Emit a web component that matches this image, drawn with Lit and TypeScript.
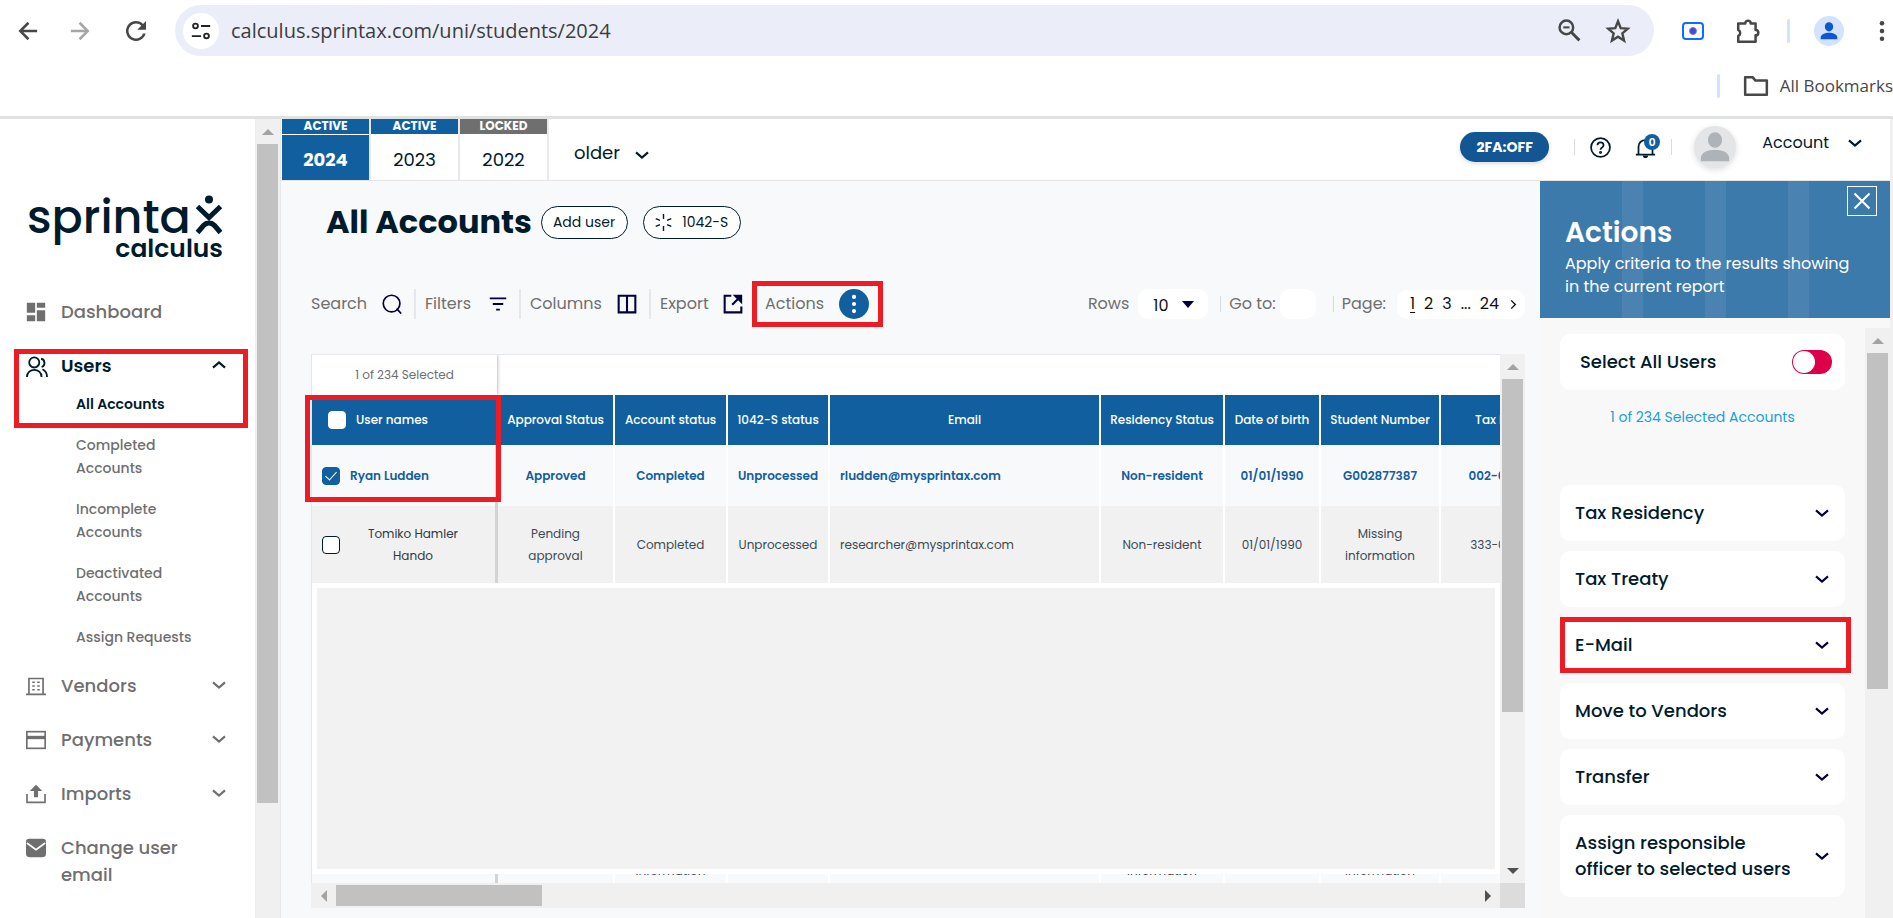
import { LitElement, html, css, svg, nothing } from "lit";
import { customElement, property } from "lit/decorators.js";

const icon = (name: string, size = 24) => html`<svg class="icon" width=${size} height=${size} viewBox="0 0 24 24" fill="none" stroke="currentColor" stroke-width="2" aria-hidden="true">${ICONS[name]}</svg>`;

const ICONS: Record<string, unknown> = {
  back: svg`<path d="M22 12H4M12.500 3 3.500 12l9 9" stroke-width="2.700"/>`,
  forward: svg`<path d="M2 12h18M11.500 3l9 9-9 9" stroke-width="2.700"/>`,
  reload: svg`<path d="M17.650 6.350A8 8 0 1 0 19.730 14h-2.080A6 6 0 1 1 12 6c1.660 0 3.140.690 4.220 1.780L13 11h7V4z" fill="currentColor" stroke="none"/>`,
  tune: svg`<circle cx="6" cy="6.500" r="2.600"/><path d="M12 6.500h10M2 17.500h10"/><circle cx="18" cy="17.500" r="2.600"/>`,
  zoomout: svg`<circle cx="9" cy="9" r="6.500" stroke-width="2.400"/><path d="M14 14l7.500 7.500" stroke-width="2.800"/><path d="M6 9h6"/>`,
  star: svg`<path d="M12 3l2.500 6.300 6.500.5-5 4.400 1.600 6.600-5.600-3.600-5.600 3.600L8 14.200 3 9.800l6.500-.5z" stroke-width="2.200"/>`,
  camera: svg`<rect x="2" y="4" width="20" height="16" rx="3" stroke="#0d6efd"/><circle cx="12" cy="12" r="3.500" fill="#4648c8" stroke="#7b7bea" stroke-width="1"/>`,
  puzzle: svg`<path d="M3 5h6.500a2.500 2.500 0 0 1 5 0H19v6a2.500 2.500 0 0 1 0 5v6H3v-5.500a3 3 0 0 0 0-5.500z" stroke-width="2.300" stroke-linejoin="round"/>`,
  person: svg`<ellipse cx="12" cy="7" rx="5" ry="5.500" fill="currentColor" stroke="none"/><path d="M2 22v-2c0-4 5-6 10-6s10 2 10 6v2z" fill="currentColor" stroke="none"/>`,
  dots: svg`<g fill="currentColor" stroke="none"><circle cx="12" cy="3.500" r="2.500"/><circle cx="12" cy="12" r="2.500"/><circle cx="12" cy="20.500" r="2.500"/></g>`,
  folder: svg`<path d="M2 4h7l2.500 3H22v13H2z" stroke-width="2.300" stroke-linejoin="round"/>`,
  chevron: svg`<path d="M3 8l9 8 9-8" stroke-width="3.200"/>`,
  chevronup: svg`<path d="M3 16l9-8 9 8" stroke-width="3.200"/>`,
  dashboard: svg`<g fill="currentColor" stroke="none"><path d="M1 1h10v12H1zM13 1h10v6H13zM1 16h10v7H1zM13 10h10v13H13z"/></g>`,
  users: svg`<circle cx="9" cy="7" r="5.500"/><path d="M1 23c0-10.500 16-10.500 16 0M16.500 3c4.500 1 5 7.500.5 9M18 14.500c3 1.500 5 4.500 5 8.500"/>`,
  building: svg`<path d="M0 22h24M3.500 22V3h17v19"/><path d="M7.500 7.500h3M13.500 7.500h3M7.500 12h3M13.500 12h3M7.500 16.500h3M13.500 16.500h3"/>`,
  card: svg`<rect x="1" y="2" width="22" height="20"/><path d="M1 9h22" stroke-width="4"/>`,
  upload: svg`<path d="M1.200 12v10h21.600V12"/><path d="M12 1l7.500 7.500h-5V16h-5V8.500h-5z" fill="currentColor" stroke="none"/>`,
  mail: svg`<rect x="0" y="1" width="24" height="22" rx="4" fill="currentColor" stroke="none"/><path d="M1 6l11 8 11-8" stroke="#fff"/>`,
  search: svg`<circle cx="11.500" cy="11.500" r="10"/><path d="M17.500 17.500 23 23.500"/>`,
  filter: svg`<path d="M1 4.500h22M5 12h14M9.500 19.500h5" stroke-width="2.500"/>`,
  columns: svg`<path d="M2 2h20v20H2zM12 2v20" stroke-width="2.500"/>`,
  export: svg`<path d="M10 2H2v20h20v-7M11 13 21 3" stroke-width="2.500"/><path d="M14 2h8v8z" fill="currentColor"/>`,
  help: svg`<circle cx="12" cy="12" r="10.800"/><path d="M8.500 9.500c0-4.500 7-4.500 7 0 0 2.500-3.500 2.500-3.500 5"/><circle cx="12" cy="17.800" r=".7"/>`,
  bell: svg`<path d="M1 20h22M4 20v-9c0-10 16-10 16 0v9"/><path d="M9 21h6c0 4-6 4-6 0z" fill="currentColor" stroke="none"/>`,
  close: svg`<path d="M2 2l20 20M22 2 2 22" stroke-width="2.800"/>`,
  loader: svg`<path d="M12 0v7M12 17v7M1 6.500l6 2.500M1 17.500 7 15M23 6.500 17 9M23 17.500 17 15"/>`,
  triangle: svg`<path d="M0 6h24L12 20z" fill="currentColor" stroke="none"/>`,
  next: svg`<path d="M7 3l9 9-9 9" stroke-width="3"/>`,
};

const shared = css`
  :host, * { box-sizing: border-box; }
  button, input, select { font: inherit; color: inherit; margin: 0; }
  button { background: none; border: 0; padding: 0; text-align: left; cursor: pointer; }
  a { color: inherit; text-decoration: none; }
  .icon { display: block; flex: none; }
  h1, h2, p { margin: 0; padding: 0; font-size: inherit; }
`;

@customElement("browser-bar")
export class BrowserBar extends LitElement {
  static styles = [shared, css`
    :host { display: block; height: 119px; background: #fff; border-bottom: 3px solid #e0e2e1; font: 20px/26px "Open Sans", "Noto Sans", sans-serif; color: #474747; overflow: hidden; }
    .row { display: flex; align-items: center; height: 51px; margin-top: 5px; padding: 0 0 0 17px; }
    .nav { display: flex; align-items: center; gap: 30px; width: 158px; }
    .off { color: #a6a6a6; }
    .address { flex: 1; height: 51px; display: flex; align-items: center; gap: 12px; padding: 0 23px 0 8px; border-radius: 26px; background: #ebeef8; }
    .tune { width: 36px; height: 36px; border-radius: 50%; background: #fff; color: #222; display: grid; place-items: center; }
    .url { flex: 1; min-width: 0; border: 0; outline: 0; padding: 0; background: none; color: #3c3d40; }
    .zooms { display: flex; gap: 23px; align-items: center; }
    .tools { display: flex; align-items: center; padding-left: 27px; }
    .puzzle { margin: 0 26px 0 30px; }
    .line { width: 3px; height: 24px; border-radius: 2px; background: #d3e3fd; }
    .profile { width: 30px; height: 30px; margin: 0 27px 0 24px; border-radius: 50%; background: #d3e3fd; color: #0b57d0; display: grid; place-items: center; }
    .marks { display: flex; justify-content: flex-end; align-items: center; height: 60px; font-size: 17px; white-space: nowrap; }
    .marks button { display: flex; align-items: center; gap: 11px; margin-left: 23px; }
  `];
  render() {
    return html`
      <div class="row">
        <div class="nav">
          <button aria-label="Back">${icon("back", 22)}</button>
          <button class="off" aria-label="Forward">${icon("forward", 22)}</button>
          <button aria-label="Reload">${icon("reload", 30)}</button>
        </div>
        <div class="address">
          <button class="tune" aria-label="Site information">${icon("tune", 22)}</button>
          <input class="url" aria-label="Address" value="calculus.sprintax.com/uni/students/2024">
          <div class="zooms"><button aria-label="Zoom">${icon("zoomout", 25)}</button><button aria-label="Bookmark">${icon("star", 26)}</button></div>
        </div>
        <div class="tools">
          <button aria-label="Capture">${icon("camera", 24)}</button>
          <button class="puzzle" aria-label="Extensions">${icon("puzzle", 26)}</button>
          <span class="line"></span>
          <button class="profile" aria-label="Profile">${icon("person", 20)}</button>
          <button aria-label="Menu">${icon("dots", 22)}</button>
        </div>
      </div>
      <div class="marks"><span class="line"></span><button>${icon("folder", 26)}All Bookmarks</button></div>`;
  }
}

@customElement("scroll-track")
export class ScrollTrack extends LitElement {
  @property({ type: Boolean, reflect: true }) horizontal = false;
  @property({ type: Number }) share = 0.5;
  @property({ type: Boolean }) end = false;
  static styles = css`
    :host { box-sizing: border-box; display: flex; flex-direction: column; width: 25px; padding: 0 2px; background: #f0f0f0; flex: none; }
    :host([horizontal]) { flex-direction: row; width: auto; height: 25px; padding: 2px 0; }
    .end { flex: none; width: 21px; height: 25px; display: grid; place-items: center; color: #a3a3a3; }
    :host([horizontal]) .end { width: 25px; height: 21px; }
    .last { color: #505050; }
    .lane { flex: 1; display: flex; flex-direction: inherit; min-height: 0; }
    .thumb { background: #c1c1c1; }
  `;
  render() {
    const [a, b] = this.horizontal ? ["M9 0v12L3 6z", "M3 0v12l6-6z"] : ["M0 9h12L6 3z", "M0 3h12L6 9z"];
    return html`<span class="end"><svg width="12" height="12"><path d=${a} fill="currentColor"/></svg></span>
      <div class="lane"><div class="thumb" style="flex: 0 0 ${this.share * 100}%"></div></div>
      ${this.end ? html`<span class="end last"><svg width="12" height="12"><path d=${b} fill="currentColor"/></svg></span>` : nothing}`;
  }
}

@customElement("side-nav")
export class SideNav extends LitElement {
  static styles = [shared, css`
    :host { display: flex; width: 281px; flex: none; background: #fff; border-right: 1px solid #e6e7ea; overflow: hidden; color: #6f6f6f; font: 500 18px/27px Poppins, Inter, sans-serif; }
    .content { flex: 1; padding-top: 72px; }
    .logo { display: block; overflow: visible; margin: 0 0 22px 28px; }
    .wordmark { font: 500 46px Poppins, Lato, sans-serif; fill: #001b2b; }
    .sub { font: 600 25px Poppins, Lato, sans-serif; fill: #001b2b; }
    .item { display: flex; align-items: flex-start; width: 100%; min-height: 54px; padding: 13px 28px 0 26px; }
    .item > .icon { margin: 4px 15px 0 0; }
    .label { flex: 1; }
    .chev { padding-top: 5px; }
    .group { position: relative; color: #001b2b; }
    .item.users { font-weight: 600; min-height: 49px; }
    .item.users > .icon { margin-right: 13px; }
    .mark { position: absolute; inset: 10px 7px -7px 14px; border: 5px solid #ed1c24; pointer-events: none; }
    .current { display: block; padding: 5px 0 5px 76px; font-size: 14px; line-height: 23px; font-weight: 600; }
    .subs { display: flex; flex-direction: column; gap: 18px; padding: 13px 0 10px 76px; font-size: 14px; line-height: 23px; }
  `];
  row(name: string, label: string, open = true) {
    return html`<button class="item">${icon(name, 20)}<span class="label">${label}</span>${open ? html`<span class="chev">${icon("chevron", 16)}</span>` : nothing}</button>`;
  }
  render() {
    return html`
      <nav class="content">
        <svg class="logo" width="200" height="72" viewBox="0 0 200 72" role="img" aria-label="sprintax calculus">
          <text class="wordmark" x="-1" y="42">sprinta</text>
          <path d="M169.500 15.500 181 26.500l11.500-11M169.500 41.500l6-7c3-3.500 8-3.500 11 0l6 7" fill="none" stroke="#001b2b" stroke-width="5"/>
          <circle cx="181" cy="8.500" r="4" fill="#001b2b"/>
          <text class="sub" x="195" y="66" text-anchor="end">calculus</text>
        </svg>
        ${this.row("dashboard", "Dashboard", false)}
        <div class="group">
          <button class="item users" aria-expanded="true">${icon("users", 22)}<span class="label">Users</span><span class="chev">${icon("chevronup", 16)}</span></button>
          <a class="current" href="#all">All Accounts</a>
          <div class="mark"></div>
        </div>
        <div class="subs">
          <a href="#completed">Completed<br>Accounts</a>
          <a href="#incomplete">Incomplete<br>Accounts</a>
          <a href="#deactivated">Deactivated<br>Accounts</a>
          <a href="#assign">Assign Requests</a>
        </div>
        ${this.row("building", "Vendors")}
        ${this.row("card", "Payments")}
        ${this.row("upload", "Imports")}
        ${this.row("mail", "Change user email", false)}
      </nav>
      <scroll-track .share=${0.852}></scroll-track>`;
  }
}

@customElement("year-header")
export class YearHeader extends LitElement {
  static styles = [shared, css`
    :host { display: flex; height: 62px; background: #fff; border-bottom: 1px solid #e4e5e7; color: #001b2b; font: 18px/24px Poppins, Inter, sans-serif; }
    .years { display: flex; margin-left: 1px; }
    .year { display: flex; flex-direction: column; width: 89px; gap: 1px; border-right: 2px solid #e9e9eb; text-align: center; }
    .state { height: 15px; background: #125f9f; color: #fff; font-weight: 700; font-size: 12px; line-height: 13px; }
    .locked { background: #6f6f6f; }
    .num { flex: 1; display: grid; place-items: center; padding-top: 4px; }
    .on { background: #125f9f; color: #fff; font-weight: 700; }
    .older { display: flex; align-items: center; gap: 14px; padding: 6px 0 0 25px; }
    .older .icon { margin-top: 5px; }
    .right { margin-left: auto; display: flex; align-items: center; padding: 0 27px 5px 0; }
    .tfa { width: 89px; height: 30px; border-radius: 15px; background: #125693; color: #fff; font-size: 14px; font-weight: 700; text-align: center; box-shadow: 0 2px 4px #0002; }
    .line { width: 1px; height: 16px; background: #d9dadc; }
    .help { margin: 0 24px 0 15px; }
    .bell { position: relative; margin-right: 15px; }
    .count { position: absolute; right: -4px; top: -3px; width: 16px; height: 16px; border-radius: 50%; background: #125f9f; color: #fff; font: 700 10px/16px Inter, sans-serif; text-align: center; }
    .pic { width: 42px; height: 42px; margin: 0 26px 0 22px; border-radius: 50%; background: #e4e5e6; color: #aeb3b7; display: grid; place-items: center; box-shadow: 0 2px 6px #0002; }
    .account { display: flex; align-items: center; gap: 18px; font-size: 16px; padding-bottom: 8px; }
    .lead { margin-left: 25px; }
  `];
  render() {
    return html`
      <nav class="years">
        <a class="year" href="#2024"><span class="state">ACTIVE</span><span class="num on">2024</span></a>
        <a class="year" href="#2023"><span class="state">ACTIVE</span><span class="num">2023</span></a>
        <a class="year" href="#2022"><span class="state locked">LOCKED</span><span class="num">2022</span></a>
      </nav>
      <button class="older">older ${icon("chevron", 16)}</button>
      <div class="right">
        <button class="tfa">2FA:OFF</button>
        <span class="line lead"></span>
        <button class="help" aria-label="Help">${icon("help", 21)}</button>
        <button class="bell" aria-label="Notifications">${icon("bell", 21)}<span class="count">0</span></button>
        <span class="line"></span>
        <span class="pic">${icon("person", 34)}</span>
        <button class="account">Account ${icon("chevron", 16)}</button>
      </div>`;
  }
}

@customElement("accounts-table")
export class AccountsTable extends LitElement {
  static styles = [shared, css`
    :host { position: relative; display: grid; grid-template: minmax(0, 1fr) 25px / minmax(0, 1fr) 25px; flex: 1; min-height: 0; color: #3c4a54; font: 12px/22px Poppins, Inter, sans-serif; }
    .view { overflow: hidden; display: flex; flex-direction: column; background: #fff; border: solid #e4e6e9; border-width: 1px 0 0 1px; }
    .corner { background: #dcdcdc; }
    .picked { flex: none; width: 185px; height: 40px; line-height: 40px; text-align: center; color: #6f6f6f; box-shadow: 0 0 4px #0006; }
    table { flex: none; width: 1273px; table-layout: fixed; border-collapse: separate; border-spacing: 0; }
    th, td { padding: 0; text-align: center; font-weight: 400; border-right: 2px solid #fff; }
    th { height: 50px; background: #125f9f; color: #fff; font-weight: 500; white-space: nowrap; }
    td { height: 77px; background: #f1f1f1; }
    td.fit { padding: 0 16px; }
    .sel td { height: 61px; background: #f8f9fb; color: #125f9f; font-weight: 600; }
    td.mail { text-align: left; padding-left: 10px; }
    td.name, .sel td.name { border-right: 3px solid #d3d3d3; }
    th.name { border-color: #125f9f; }
    .who { display: flex; align-items: center; padding-left: 10px; color: #2c3a45; }
    .who label { flex: 1; padding: 0 29px 0 20px; }
    th .who { padding-left: 16px; color: #fff; }
    th .who label, .sel .who label { text-align: left; padding-left: 10px; color: inherit; }
    .sel .who { color: #125f9f; }
    input { appearance: none; flex: none; width: 18px; height: 18px; border: 1px solid #001b2b; border-radius: 4px; background: #fff; display: grid; place-items: center; }
    th input { border-color: #fff; }
    input:checked { background: #125f9f; border-color: #125f9f; }
    input:checked::before { content: ""; width: 5px; height: 10px; margin-top: -2px; border: solid #fff; border-width: 0 1px 1px 0; transform: rotate(42deg); }
    .filler { flex: 1; min-height: 0; margin: 5px; background: #f2f2f2; }
    .partial td { height: 9px; line-height: 24px; background: #f8f9fb; }
    .cut { display: flex; align-items: flex-end; justify-content: center; height: 9px; overflow: hidden; color: #3c4a54; }
    .mark { position: absolute; left: -6px; top: 41px; width: 196px; height: 107px; border: 5px solid #ed1c24; pointer-events: none; }
  `];
  cols() {
    return html`<colgroup>${[186, 117, 113, 102, 271, 124, 96, 120, 144].map(w => html`<col style="width:${w}px">`)}</colgroup>`;
  }
  render() {
    const heads = ["Approval Status", "Account status", "1042-S status", "Email", "Residency Status", "Date of birth", "Student Number", "Tax ID (SSN)"];
    const kinds: Record<number, string> = { 0: "fit", 3: "mail", 6: "fit" };
    const rows = [
      { sel: true, name: "Ryan Ludden", cells: ["Approved", "Completed", "Unprocessed", "rludden@mysprintax.com", "Non-resident", "01/01/1990", "G002877387", "002-00-10000"] },
      { sel: false, name: "Tomiko Hamler Hando", cells: ["Pending approval", "Completed", "Unprocessed", "researcher@mysprintax.com", "Non-resident", "01/01/1990", "Missing information", "333-00-10000"] },
    ];
    return html`
      <div class="view">
        <div class="picked">1 of 234 Selected</div>
        <table>${this.cols()}
          <thead><tr>
            <th class="name"><span class="who"><input type="checkbox" id="all"><label for="all">User names</label></span></th>
            ${heads.map(h => html`<th>${h}</th>`)}
          </tr></thead>
          <tbody>${rows.map((r, i) => html`<tr class=${r.sel ? "sel" : ""}>
            <td class="name"><span class="who"><input type="checkbox" id="u${i}" .checked=${r.sel}><label for="u${i}">${r.name}</label></span></td>
            ${r.cells.map((c, j) => html`<td class=${kinds[j] ?? ""}>${c}</td>`)}
          </tr>`)}</tbody>
        </table>
        <div class="filler"></div>
        <table>${this.cols()}<tbody><tr class="partial">
          <td class="name"></td>${[0, 1, 0, 0, 1, 0, 1, 0].map(v => html`<td><div class="cut">${v ? "information" : ""}</div></td>`)}
        </tr></tbody></table>
      </div>
      <scroll-track .share=${0.695} end></scroll-track>
      <scroll-track horizontal .share=${0.181} end></scroll-track>
      <div class="corner"></div>
      <div class="mark"></div>`;
  }
}

@customElement("accounts-page")
export class AccountsPage extends LitElement {
  static styles = [shared, css`
    :host { flex: 1; min-width: 0; display: flex; flex-direction: column; padding: 23px 15px 10px 30px; color: #6f6f6f; font: 16px/24px Poppins, Inter, sans-serif; }
    .title { display: flex; align-items: center; padding-left: 15px; height: 36px; gap: 15px; color: #001b2b; }
    h1 { font: 700 32px/36px Poppins, Inter, sans-serif; margin-right: -6px; white-space: nowrap; }
    .pill { display: flex; align-items: center; gap: 10px; height: 33px; padding: 0 12px 0 11px; border: 1px solid #001b2b; border-radius: 17px; background: #fff; font-size: 14px; }
    .bar { display: flex; align-items: center; height: 46px; margin: 41px 0 27px; white-space: nowrap; }
    .tool { display: flex; align-items: center; justify-content: space-between; height: 30px; padding-right: 12px; margin-right: 9px; border-right: 2px solid #e6e7ea; }
    .tool .icon { color: #00003c; }
    .search { width: 105px; } .filters { width: 96px; } .cols { width: 121px; }
    .export { width: 83px; border: 0; padding: 0; }
    .actions { display: flex; align-items: center; justify-content: space-between; width: 131px; height: 46px; padding: 0 9px 0 8px; border: 5px solid #ed1c24; }
    .more { width: 30px; height: 30px; border-radius: 50%; background: #125f9f; display: grid; place-items: center; color: #fff; }
    .pager { display: flex; align-items: center; margin-left: auto; }
    .rows { display: flex; align-items: center; position: relative; width: 70px; margin: 0 12px 0 9px; color: #00003c; }
    select { appearance: none; width: 100%; height: 30px; padding: 4px 0 0 15px; border: 0; border-radius: 10px; background: #fff; color: #111; }
    .rows .icon { position: absolute; right: 14px; pointer-events: none; }
    .go { width: 36px; height: 30px; margin: 0 17px 0 4px; border: 0; border-radius: 10px; background: #fff; }
    .line { width: 1px; height: 16px; margin-right: 8px; background: #d9dadc; }
    .pages { display: flex; align-items: center; justify-content: space-between; width: 128px; height: 29px; margin-left: 11px; padding: 0 6px 0 13px; border-radius: 10px; background: #fff; color: #111; }
    .now { text-decoration: underline; text-underline-offset: 3px; }
  `];
  render() {
    return html`
      <div class="title"><h1>All Accounts</h1><button class="pill">Add user</button><button class="pill">${icon("loader", 17)}1042-S</button></div>
      <div class="bar">
        <button class="tool search">Search ${icon("search", 20)}</button>
        <button class="tool filters">Filters ${icon("filter", 18)}</button>
        <button class="tool cols">Columns ${icon("columns", 20)}</button>
        <button class="tool export">Export ${icon("export", 20)}</button>
        <button class="actions">Actions <span class="more">${icon("dots", 20)}</span></button>
        <div class="pager">
          <label for="rows">Rows</label>
          <span class="rows"><select id="rows"><option>10</option><option>20</option></select>${icon("triangle", 12)}</span>
          <span class="line"></span>
          <label for="go">Go to:</label><input class="go" id="go">
          <span class="line"></span>
          Page:
          <nav class="pages"><a class="now" href="#1">1</a><a href="#2">2</a><a href="#3">3</a><span>...</span><a href="#24">24</a><a href="#next" aria-label="Next page">${icon("next", 11)}</a></nav>
        </div>
      </div>
      <accounts-table></accounts-table>`;
  }
}

@customElement("actions-panel")
export class ActionsPanel extends LitElement {
  static styles = [shared, css`
    :host { display: flex; flex-direction: column; width: 350px; flex: none; background: #f8f8f8; color: #001b2b; font: 500 18px/26px Poppins, Inter, sans-serif; }
    .head { position: relative; flex: none; height: 137px; padding: 34px 0 0 25px; color: #fff; background: linear-gradient(90deg, transparent 82px, #4a82b1 82px 103px, transparent 103px 165px, #4a82b1 165px 186px, transparent 186px 248px, #4a82b1 248px 269px, transparent 269px) #3d7aac; }
    h2 { font: 600 28px/36px Poppins, Inter, sans-serif; }
    .head p { font-size: 16px; line-height: 23px; font-weight: 400; margin-top: 1px; }
    .close { position: absolute; right: 13px; top: 5px; width: 30px; height: 30px; border: 1px solid #fff; display: grid; place-items: center; }
    .body { flex: 1; min-height: 0; display: flex; overflow: hidden; }
    .list { flex: 1; display: flex; flex-direction: column; gap: 10px; padding: 16px 20px 0; }
    .card { display: flex; justify-content: space-between; align-items: center; min-height: 56px; flex: none; padding: 15px; border-radius: 10px; background: #fff; white-space: nowrap; }
    .all { padding: 0 13px 0 20px; }
    .hint { color: #1ba0d8; font: 400 14px/22px Poppins, Inter, sans-serif; text-align: center; margin: 6px 0 47px; }
    .mark { border: 5px solid #ed1c24; border-radius: 0; margin-right: -6px; padding: 10px 16px 10px 10px; }
    .toggle { appearance: none; width: 40px; height: 24px; border-radius: 12px; background: #dd0048; padding: 1px; }
    .toggle::before { content: ""; display: block; width: 22px; height: 22px; border-radius: 50%; background: #fff; }
    .card .icon { color: #00003c; }
    .wide { min-height: 82px; }
    scroll-track { margin-top: 10px; }
  `];
  render() {
    const names = ["Tax Residency", "Tax Treaty", "E-Mail", "Move to Vendors", "Transfer"];
    return html`
      <div class="head">
        <h2>Actions</h2>
        <p>Apply criteria to the results showing<br>in the current report</p>
        <button class="close" aria-label="Close">${icon("close", 18)}</button>
      </div>
      <div class="body">
        <div class="list">
          <div class="card all"><label for="everyone">Select All Users</label><input class="toggle" id="everyone" type="checkbox" role="switch"></div>
          <p class="hint">1 of 234 Selected Accounts</p>
          ${names.map(n => html`<button class="card ${n === "E-Mail" ? "mark" : ""}">${n} ${icon("chevron", 16)}</button>`)}
          <button class="card wide"><span>Assign responsible<br>officer to selected users</span>${icon("chevron", 16)}</button>
        </div>
        <scroll-track .share=${0.595}></scroll-track>
      </div>`;
  }
}

@customElement("app-root")
export class AppRoot extends LitElement {
  static styles = css`
    :host { display: flex; flex-direction: column; height: 100vh; overflow: hidden; background: #f0f0f0; }
    .app { flex: 1; min-height: 0; display: flex; padding-right: 3px; }
    .main { flex: 1; min-width: 0; display: flex; flex-direction: column; background: #f8f9fb; }
    .work { flex: 1; min-height: 0; display: flex; }
  `;
  render() {
    return html`<browser-bar></browser-bar>
      <div class="app">
        <side-nav></side-nav>
        <div class="main">
          <year-header></year-header>
          <div class="work"><accounts-page></accounts-page><actions-panel></actions-panel></div>
        </div>
      </div>`;
  }
}
